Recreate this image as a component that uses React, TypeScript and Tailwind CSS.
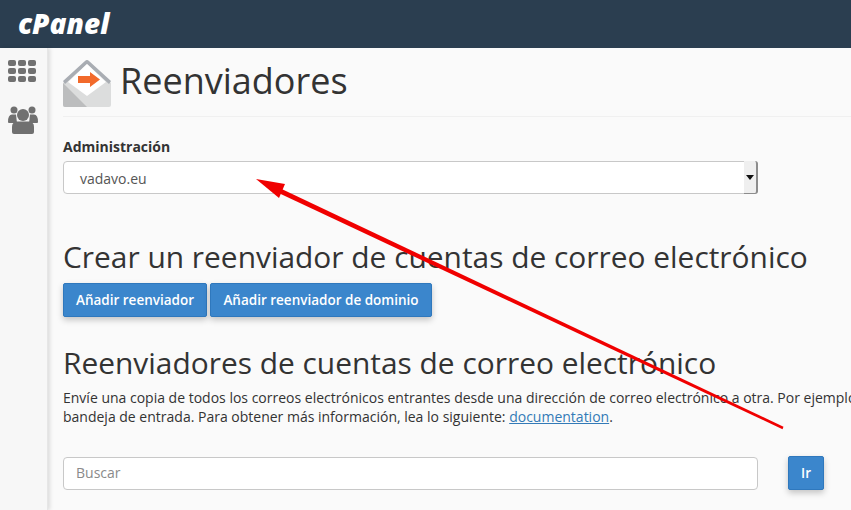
const font = { fontFamily: '"Open Sans", sans-serif' };

function ForwarderIcon() {
  return (
    <svg width="48" height="48" viewBox="0 0 48 48" className="shrink-0">
      <path d="M0 24 L24 1 L48 24 V46 Q48 48 46 48 H2 Q0 48 0 46 Z" fill="#dcdddd" />
      <path d="M0 22 L22 2 Q24 0 26 2 L48 22 L46 25 L24 5 L2 25 Z" fill="#a9adb3" />
      <path d="M5 23 L24 5 L43 23 L24 37 Z" fill="#ffffff" />
      <path d="M0 24 L24 48 H2 Q0 48 0 46 Z" fill="#bcbdbe" />
      <path d="M15 17 H27 V13 L37 20.5 L27 28 V24 H15 Z" fill="#f26a2b" />
    </svg>
  );
}

function GridIcon() {
  return (
    <div className="grid grid-cols-3 gap-[2px] w-[28px]">
      {Array.from({ length: 9 }).map((_, i) => (
        <div key={i} className="h-[6px] rounded-[2px] bg-[#707070]" />
      ))}
    </div>
  );
}

function UsersIcon() {
  return (
    <svg width="30" height="28" viewBox="0 0 30 28">
      <circle cx="6" cy="4" r="3.5" fill="#707070" />
      <circle cx="24" cy="4" r="3.5" fill="#707070" />
      <path d="M0 16 Q0 8.5 4 8.5 H8 L9 17 H1 Q0 17 0 16 Z" fill="#707070" />
      <path d="M30 16 Q30 8.5 26 8.5 H22 L21 17 H29 Q30 17 30 16 Z" fill="#707070" />
      <circle cx="15" cy="9" r="6" fill="#707070" />
      <path d="M4 26 V21 Q4 15.5 9.5 15.5 H20.5 Q26 15.5 26 21 V26 Q26 28 24 28 H6 Q4 28 4 26 Z" fill="#707070" />
    </svg>
  );
}

function BlueButton({ children, className }: { children: React.ReactNode; className?: string }) {
  return (
    <button className={"h-[34px] rounded-[2px] bg-[#3b86cc] border border-[#2f78bd] text-white text-[13.5px] font-semibold shadow-[0_3px_6px_rgba(0,0,0,0.22)] " + (className ?? "")}>
      {children}
    </button>
  );
}

export default function App() {
  return (
    <div style={font} className="relative w-[851px] h-[510px] overflow-hidden bg-[#fafafa] text-[#333333]">
      {/* Top bar */}
      <header className="h-12 bg-[#2b3e50] flex items-center pl-[18px]">
        <span className="text-white text-[28px] font-extrabold italic leading-none -mt-[3px]">cPanel</span>
      </header>

      <div className="flex h-[462px]">
        {/* Sidebar */}
        <aside className="w-[48px] shrink-0 bg-[#f7f7f7] border-r border-[#e6e6e6] shadow-[2px_0_4px_rgba(0,0,0,0.12)] flex flex-col items-start pt-[12px] pl-[8px]">
          <GridIcon />
          <div className="mt-[24px]">
            <UsersIcon />
          </div>
        </aside>

        {/* Content */}
        <main className="flex-1 pl-[15px] overflow-hidden">
          <div className="flex items-start gap-[9px] pt-[11px] h-[69px] border-b border-[#f0f0f0] w-[800px]">
            <ForwarderIcon />
            <h1 className="text-[36px] leading-[44px] text-[#333333]">Reenviadores</h1>
          </div>

          <label className="block mt-[20px] text-[14px] leading-[20px] font-bold">Administración</label>
          <div className="relative mt-[4px] w-[695px] h-[33px] rounded-[4px] border border-[#c8c8c8] bg-white flex items-center pl-[16px] pt-[1px] text-[14px] text-[#555555]">
            vadavo.eu
            <div className="absolute right-[-1px] top-[-1px] w-[14px] h-[33px] bg-[#efefef] border-r-2 border-b border-[#8c8c8c] rounded-r-[3px] flex items-center justify-center">
              <svg width="8" height="6" viewBox="0 0 8 6">
                <path d="M0 1 H8 L4 6 Z" fill="#111111" />
              </svg>
            </div>
          </div>

          <h2 className="mt-[45px] text-[29.9px] leading-[36px] whitespace-nowrap">Crear un reenviador de cuentas de correo electrónico</h2>
          <div className="flex gap-[3px] mt-[8px]">
            <BlueButton className="w-[144px]">Añadir reenviador</BlueButton>
            <BlueButton className="w-[222px]">Añadir reenviador de dominio</BlueButton>
          </div>

          <h2 className="mt-[28px] text-[29.9px] leading-[36px] whitespace-nowrap">Reenviadores de cuentas de correo electrónico</h2>
          <p className="mt-[7px] text-[14px] leading-[19px] whitespace-nowrap">
            Envíe una copia de todos los correos electrónicos entrantes desde una dirección de correo electrónico a otra. Por ejemplo, reenvíe
            <br />
            bandeja de entrada. Para obtener más información, lea lo siguiente: <a className="text-[#337ab7] underline">documentation</a>.
          </p>

          <div className="flex items-center mt-[30px]">
            <div className="w-[695px] h-[33px] rounded-[4px] border border-[#c8c8c8] bg-white flex items-center pl-[12px] pb-[1px] text-[14px] text-[#8a8a8a]">Buscar</div>
            <BlueButton className="ml-[30px] w-[36px]">Ir</BlueButton>
          </div>
        </main>
      </div>

      {/* Red annotation arrow */}
      <svg className="absolute left-0 top-0 pointer-events-none" width="851" height="510">
        <path d="M783.5 426.8 L782.5 429.2 L277 192.3 L279 187.7 Z" fill="#f00000" />
        <path d="M256 179 L285 184 L279 198 Z" fill="#f00000" />
      </svg>
    </div>
  );
}
